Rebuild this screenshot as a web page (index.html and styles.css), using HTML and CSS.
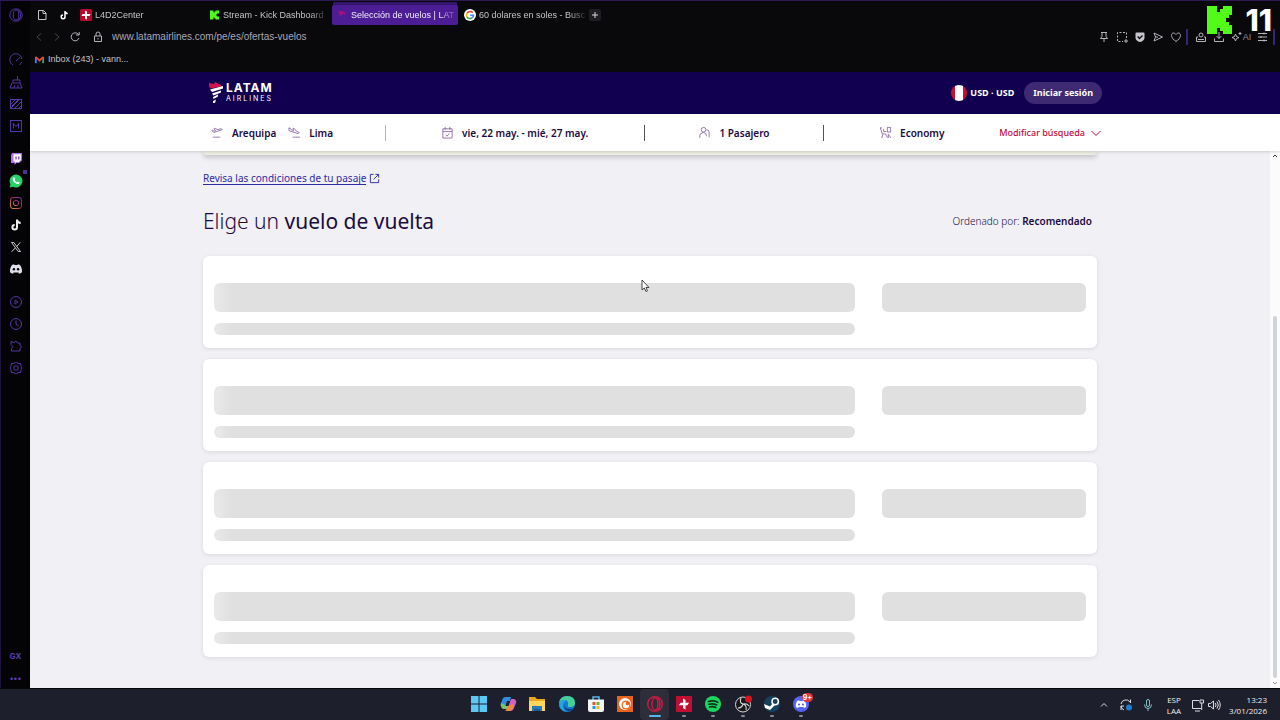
FILE: index.html
```html
<!DOCTYPE html>
<html lang="es">
<head>
  <meta charset="UTF-8" />
  <meta name="viewport" content="width=device-width, initial-scale=1.0"/>
  <title>Selección de vuelos | LATAM Airlines</title>
  <link rel="stylesheet" href="styles.css">
</head>
<body>

<div class="desktop">
  <div class="browser">

    <!-- Sidebar -->
    <nav class="sidebar" aria-label="Barra lateral">
      <button class="side-btn side-logo" aria-label="Opera"><svg viewBox="0 0 14 14"><circle cx="7" cy="7" r="6.2"/><ellipse cx="7" cy="7" rx="2.8" ry="5"/><path d="M9 1.5C12.500 4 12.500 10 9 12.500"/></svg></button>
      <button class="side-btn" aria-label="GX Control"><svg viewBox="0 0 14 14"><path d="M4 12A6 6 0 1 1 12.800 6M7 8l4-3.500M12.500 9a6 6 0 0 1-2 3"/></svg></button>
      <button class="side-btn" aria-label="GX Cleaner"><svg viewBox="0 0 14 14"><path d="M8.500 1v4M4 5h7v3H4zM3 8l-2 5h12l-2-5M5 13l1-3M9 13v-3"/></svg></button>
      <button class="side-btn" aria-label="GX Mods"><svg viewBox="0 0 14 14"><rect x="1.500" y="2.500" width="11" height="9"/><path d="M2 7l4-4M2 11l8-8M6 11l6-6M3 9l6-6M10 11l2-2"/></svg></button>
      <button class="side-btn" aria-label="Mods"><svg viewBox="0 0 14 14"><rect x="1.500" y="1.500" width="11" height="11"/><path d="M4.500 9.500v-5L7 7.500l2.500-3v5"/></svg></button>

      <button class="side-btn side-group" aria-label="Twitch"><svg class="plain" viewBox="0 0 14 14"><path fill="#b26cf5" d="M3 1h10v7.500L10 11H7.500L5.500 13v-2H2V3z"/><path fill="#fff" d="M4.500 2.300h7.300V8l-2 2H7.400L6 11V9.500H4.500z"/><path stroke="#9146d8" stroke-width="1.400" d="M7 4.500v3M9.800 4.500v3"/></svg></button>
      <button class="side-btn whatsapp" aria-label="WhatsApp"><svg class="plain" viewBox="0 0 14 14"><path fill="#25d366" d="M7 .5a6.500 6.500 0 1 1-3 12.300L.6 13.500l.9-3.200A6.500 6.500 0 0 1 7 .5z"/><path fill="#fff" d="M4.400 3.500l1-.2.9 1.800-.6.900c.5 1 1.200 1.600 2.300 2.200l.8-.8 1.800.9c0 1.500-1.300 2-2.300 1.800C6 9.700 3.300 7 3.700 4.600z"/></svg></button>
      <button class="side-btn" aria-label="Instagram"><svg class="insta" viewBox="0 0 14 14"><defs><linearGradient id="ig" x1="0" y1="1" x2="1" y2="0"><stop offset="0" stop-color="#d99a32"/><stop offset=".5" stop-color="#b02a50"/><stop offset="1" stop-color="#7a2bb0"/></linearGradient></defs><rect x="1.500" y="1.500" width="11" height="11" rx="2.500"/><circle cx="7" cy="7" r="2.700"/><path d="M10 3.800h.8"/></svg></button>
      <button class="side-btn" aria-label="TikTok"><svg class="plain" viewBox="0 0 14 14"><path fill="none" stroke="#eee" stroke-width="2" d="M8 1.500v7.800A2.300 2.300 0 1 1 5.700 7M8 2c.4 2 1.800 2.900 3.700 3"/></svg></button>
      <button class="side-btn" aria-label="X"><svg class="plain" viewBox="0 0 14 14"><path fill="none" stroke="#c9c9d2" d="M2.500 2.500h2.300l6.700 9H9.200zM11.300 2.300L7.800 6.400M6.200 8l-3.600 3.800"/></svg></button>
      <button class="side-btn" aria-label="Discord"><svg class="plain" viewBox="0 0 14 14"><path fill="#dedee8" d="M3 3l2-.8.600.8h2.800l.6-.8 2 .8c1.500 2 2.200 4.500 2 7.300-1 .8-2 1.200-3 1.500l-.7-1.200H4.700L4 11.800c-1-.3-2-.7-3-1.500C.8 7.500 1.500 5 3 3z"/><circle cx="4.900" cy="7.300" r="1.200"/><circle cx="9.100" cy="7.300" r="1.200"/></svg></button>

      <button class="side-btn side-group" aria-label="Reproductor"><svg viewBox="0 0 14 14"><circle cx="7" cy="7" r="5.500"/><path d="M6 5l3 2-3 2z"/></svg></button>
      <button class="side-btn" aria-label="Historial"><svg viewBox="0 0 14 14"><circle cx="7" cy="7" r="5.500"/><path d="M7 3.500V7l2.500 2"/></svg></button>
      <button class="side-btn" aria-label="Extensiones"><svg viewBox="0 0 14 14"><path d="M2 2.500l3 1L7 2l1.500 2H11v2.500L12.800 8 11 9.500V12H2.500V9.500L4 7.500 2 5.500z"/></svg></button>
      <button class="side-btn" aria-label="Configuración"><svg viewBox="0 0 14 14"><path d="M7 1l2 1.300 2.500.2.500 2.500L13 7l-1 2-.5 2.500-2.500.2L7 13l-2-1.300-2.500-.2L2 9 1 7l1-2 .5-2.500L5 2.300z"/><circle cx="7" cy="7" r="2.300"/></svg></button>

      <button class="side-btn side-text side-bottom">GX</button>
      <button class="side-btn side-text" aria-label="Más">•••</button>
    </nav>

    <div class="window">

      <!-- Browser chrome -->
      <header class="chrome">
        <div class="tabs">
          <button class="tab-pin" aria-label="Espacio"><svg viewBox="0 0 12 12"><path fill="none" stroke="#c6c6c9" d="M2.500 1.500h5l2.500 2.500v6.500H2.500zM7 1.500v3h3"/></svg></button>
          <button class="tab-pin" aria-label="TikTok"><svg viewBox="0 0 12 12"><path fill="none" stroke="#fff" stroke-width="1.500" d="M7 2v5.800A1.900 1.900 0 1 1 5 6M7 2.500c.3 1.400 1.300 2 2.700 2"/></svg></button>
          <button class="tab">
            <svg viewBox="0 0 12 12"><rect width="12" height="12" rx="1.500" fill="#b8062d"/><path fill="#fff" d="M5 1.500l2 1V5h3.500l-1 2H7v3.500l-2-1V7H1.500l1-2H5z"/></svg>
            <span>L4D2Center</span>
          </button>
          <button class="tab">
            <svg viewBox="0 0 12 12"><path fill="#53fc18" d="M2 1.500h3.500v2h1v-1h1v-1H11v3H9v1H8v1h1v1h2v3H7.500v-1h-1v-1h-1v2H2z"/></svg>
            <span>Stream - Kick Dashboard</span>
          </button>
          <button class="tab tab-active">
            <svg viewBox="0 0 12 12"><path fill="#a3127f" d="M2 2.500c3-1 5-.5 8 1.300L8.500 5.500 6 5l-.5 3.500z"/></svg>
            <span>Selección de vuelos | LAT</span>
          </button>
          <button class="tab">
            <svg viewBox="0 0 12 12"><circle cx="6" cy="6" r="6" fill="#fff"/><g fill="none" stroke-width="1.600"><path stroke="#ea4335" d="M2.900 4.300A3.600 3.600 0 0 1 8.700 3.600"/><path stroke="#fbbc05" d="M2.900 4.300a3.600 3.600 0 0 0 0 3.500"/><path stroke="#34a853" d="M2.900 7.800a3.600 3.600 0 0 0 5.500.9"/><path stroke="#4285f4" d="M8.400 8.700A3.500 3.500 0 0 0 9.500 6.200H6.200"/></g></svg>
            <span>60 dolares en soles - Busc</span>
          </button>
          <button class="tab-new" aria-label="Nueva pestaña"><svg viewBox="0 0 12 12"><path stroke="#d8d8dc" d="M6 3v6M3 6h6"/></svg></button>
        </div>

        <div class="toolbar">
          <button class="tool dim" aria-label="Atrás"><svg viewBox="0 0 12 12"><path d="M8 2.500L4 6l4 3.500"/></svg></button>
          <button class="tool dim" aria-label="Adelante"><svg viewBox="0 0 12 12"><path d="M4 2.500L8 6l-4 3.500"/></svg></button>
          <button class="tool" aria-label="Recargar"><svg viewBox="0 0 12 12"><path d="M10 7a4 4 0 1 1-1-4l1 1M10.200 1v3H7"/></svg></button>
          <button class="tool lock" aria-label="Sitio seguro"><svg viewBox="0 0 12 12"><path d="M2.500 5h7v5.500h-7zM4 5V3a2 2 0 0 1 4 0v2M6 7v1.500"/></svg></button>
          <input class="address" type="text" aria-label="Dirección" value="www.latamairlines.com/pe/es/ofertas-vuelos">
          <div class="tools">
            <button class="tool" aria-label="Fijar"><svg viewBox="0 0 12 12"><path d="M3 1.500h6M4 1.500v4L2.500 7.500h7L8 5.500v-4M6 7.500V11"/></svg></button>
            <button class="tool" aria-label="Captura"><svg viewBox="0 0 12 12"><path stroke-dasharray="2 1.500" d="M10.500 7V1.500h-9v9H7"/><path d="M8 10h4M10 8v4"/></svg></button>
            <button class="tool" aria-label="Protección"><svg viewBox="0 0 12 12"><path fill="#c6c4cc" stroke="none" d="M1.500 2.500q0-1 1-1h7q1 0 1 1V7Q10 10 6 11 2 10 1.500 7z"/><path stroke="#0a0a0c" stroke-width="1.300" d="M3.700 5.500L5.500 7.500l3-3"/></svg></button>
            <button class="tool" aria-label="Enviar"><svg viewBox="0 0 12 12"><path d="M2 2l8.500 4L2 10l1.500-4zM3.500 6H6"/></svg></button>
            <button class="tool" aria-label="Favoritos"><svg viewBox="0 0 12 12"><path d="M6 10.500C0 6.500 1 2 3.500 2 5 2 6 3.500 6 3.500S7 2 8.500 2C11 2 12 6.500 6 10.500z"/></svg></button>
          </div>
          <span class="tool-sep"></span>
          <div class="tools tools-end">
            <button class="tool" aria-label="Perfil"><svg viewBox="0 0 12 12"><path d="M3 6H1.500v4.500h9V6H9M3 8.500h6"/><circle cx="6" cy="4" r="2"/></svg></button>
            <button class="tool" aria-label="Descargas"><svg viewBox="0 0 12 12"><path d="M6 1v6.500M3.500 5L6 7.500 8.500 5M1.500 7.500v3h9v-3"/></svg></button>
            <button class="tool tool-ai"><svg viewBox="0 0 12 12"><path d="M4.500 3l1 2.500L8 6.500 5.500 7.500l-1 2.500-1-2.500L1 6.500l2.500-1zM9 1v3M7.500 2.500h3"/></svg>AI</button>
            <button class="tool" aria-label="Menú"><svg viewBox="0 0 12 12"><path d="M1 2.500h9M1 6h9M1 9.500h9M7 1.500v2M4 5v2M7 8.500v2"/></svg></button>
          </div>
          <span class="tool-sep"></span>
        </div>

        <div class="bookmarks">
          <a class="bookmark" href="#">
            <svg viewBox="0 0 12 12"><path fill="#4285f4" d="M1 3h2v7H1z"/><path fill="#34a853" d="M9 3h2v7H9z"/><path fill="none" stroke="#ea4335" stroke-width="2" d="M2 3.500l4 3.500 4-3.500"/></svg>
            Inbox (243) - vann...
          </a>
        </div>
      </header>

      <!-- Page -->
      <header class="site-header">
        <div class="wrap site-header-inner">
          <a class="logo" href="#" aria-label="LATAM Airlines">
            <svg viewBox="0 0 16 24"><path fill="#d3124f" d="M1 2l5 1L7 1l6 3v1.500L3 7.500 1 6z"/><path fill="#fff" d="M2 8.500L15 5v2.500L4 11zM4 12.500L13 9.500v2L5.500 14.500zM5 16l5-2.500v2L5.500 18zM5 20l3-1.500L7 22H5z"/></svg>
            <span class="logo-text"><b>LATAM</b><i>AIRLINES</i></span>
          </a>
          <div class="header-actions">
            <button class="currency">
              <span class="flag"></span>
              USD · USD
            </button>
            <button class="login">Iniciar sesión</button>
          </div>
        </div>
      </header>

      <section class="search-bar">
        <div class="wrap search-inner">
          <div class="search-item route">
            <span class="place"><svg viewBox="0 0 14 14"><path d="M1 5l2 2 9-3q-.5-1.500-2-1L7.500 4 4 2.500 3 3l2 2-2 .5L1.800 4.500zM2 12h8"/></svg>Arequipa</span>
            <span class="place"><svg viewBox="0 0 14 14"><path d="M1 2v3l9.500 3q1.500 0 1.500-1L9 5.500 6.500 2.500H5.500L6 5 3.500 4 2.500 2.500zM5 12h8"/></svg>Lima</span>
          </div>
          <div class="search-item dates"><svg viewBox="0 0 14 14"><path d="M2 3h10v10H2zM2 6h10M4.500 1v3M9.500 1v3M5 9.500L6.500 11 9 8"/></svg>vie, 22 may. - mié, 27 may.</div>
          <div class="search-item"><svg viewBox="0 0 14 14"><circle cx="6" cy="4" r="2.500"/><path d="M2 13v-3q0-2.500 4-3 3 .5 3 3v1M9 4q3 0 3 3v5"/></svg>1 Pasajero</div>
          <div class="search-item"><svg viewBox="0 0 14 14"><path d="M1.500 2l2 6.500H7l2 4M1 2h2M5 3v3h3M3 13l1-4M9 1.500h3.500v5H9zM10 13V9l3 4"/></svg>Economy</div>
          <button class="modify">Modificar búsqueda <svg viewBox="0 0 12 12"><path d="M1.500 4L6 8.500 10.500 4"/></svg></button>
        </div>
      </section>

      <div class="viewport">
        <main class="results">
          <div class="wrap">
            <div class="selected-flight"></div>
            <a class="conditions" href="#"><span>Revisa las condiciones de tu pasaje</span><svg viewBox="0 0 12 12"><path d="M5 1.500H1.500v9h9V7M7 1.500h3.500V5M10.500 1.500L5 7"/></svg></a>
            <div class="results-head">
              <h1>Elige un <strong>vuelo de vuelta</strong></h1>
              <button class="sort">Ordenado por: <strong>Recomendado</strong></button>
            </div>
            <ul class="flights">
              <li class="flight-card">
                <div class="bones"><span class="bone bone-lg"></span><span class="bone bone-sm"></span></div>
                <span class="bone bone-price"></span>
              </li>
              <li class="flight-card">
                <div class="bones"><span class="bone bone-lg"></span><span class="bone bone-sm"></span></div>
                <span class="bone bone-price"></span>
              </li>
              <li class="flight-card">
                <div class="bones"><span class="bone bone-lg"></span><span class="bone bone-sm"></span></div>
                <span class="bone bone-price"></span>
              </li>
              <li class="flight-card">
                <div class="bones"><span class="bone bone-lg"></span><span class="bone bone-sm"></span></div>
                <span class="bone bone-price"></span>
              </li>
            </ul>
          </div>
        </main>
        <div class="scrollbar">
          <svg viewBox="0 0 10 10"><path d="M3 6l2-2 2 2"/></svg>
          <div class="scroll-track"><div class="scroll-thumb"></div></div>
          <svg class="down" viewBox="0 0 10 10"><path d="M3 4l2 2 2-2"/></svg>
        </div>
      </div>
    </div>
  </div>

  <!-- Taskbar -->
  <footer class="taskbar">
    <div class="apps">
      <button class="app" aria-label="Inicio"><svg viewBox="0 0 18 18"><path fill="#5cc8f5" d="M1 1h7.500v7.500H1zM9.500 1H17v7.500H9.500zM1 9.500h7.500V17H1zM9.500 9.500H17V17H9.500z"/></svg></button>
      <button class="app" aria-label="Copilot"><svg viewBox="0 0 18 18"><path fill="#2a8fe0" d="M6 2h6l-3 9H3Q1 11 2 8l2-5z"/><path fill="#7cc36a" d="M2 8q-1 4 2 6h4l2-6-4 2z"/><path fill="#d160c0" d="M12 4h3q3 1 2 4l-2 5q-1 3-4 3H7z"/><path fill="#f0884b" d="M8 11l7-2-1 4q-1 3-4 3H6q2-1 2-5z"/><path fill="#1e1f2c" d="M8 6h3l-1.500 5h-3z"/></svg></button>
      <button class="app" aria-label="Explorador"><svg viewBox="0 0 18 18"><path fill="#e9a820" d="M1 2h6l2 2h8v12H1z"/><path fill="#ffd65c" d="M1 6h16v10H1z"/><path fill="#2878c0" d="M4 11h10v5H4z"/><path fill="#1d5a98" d="M6 14h6v2H6z"/></svg></button>
      <button class="app" aria-label="Edge"><svg viewBox="0 0 18 18"><circle cx="9" cy="9" r="8" fill="#1a78d0"/><path fill="#45cf9a" d="M9 1q8 0 8 7 0 4-5 4-3 0-2-2 1-5-4-5-3 0-5 3Q2 1 9 1z"/><path fill="#1fa7e0" d="M1 8q3-5 8-2-4 0-4 5 0 4 4 6-8-1-8-9z"/><path fill="#123c7c" d="M7 9q-1 5 4 5 3 0 5-1-2 3-5 3-6-1-4-7z"/></svg></button>
      <button class="app" aria-label="Store"><svg viewBox="0 0 18 18"><path fill="none" stroke="#55b6e8" stroke-width="1.500" d="M6 5V2h6v3"/><path fill="#f3f3f5" d="M1 4.500h16V15q0 2-2 2H3q-2 0-2-2z"/><path fill="#e8502c" d="M5.500 7h3v3h-3z"/><path fill="#6eb52c" d="M9.500 7h3v3h-3z"/><path fill="#1f9be0" d="M5.500 11h3v3h-3z"/><path fill="#f5b81c" d="M9.500 11h3v3h-3z"/></svg></button>
      <button class="app" aria-label="Crunchyroll"><svg viewBox="0 0 18 18"><path fill="#e8641c" d="M1 1h16v16H1z"/><circle cx="9" cy="9" r="6" fill="#fff"/><circle cx="10" cy="10" r="4.500" fill="#e8641c"/><circle cx="10" cy="10" r="3.200" fill="#fff"/><circle cx="11.500" cy="8.500" r="1.800" fill="#e8641c"/></svg></button>
      <button class="app running current" aria-label="Opera GX"><svg viewBox="0 0 18 18"><g fill="none" stroke="#c21d42" stroke-width="1.500"><circle cx="9" cy="9" r="7.300"/><ellipse cx="9" cy="9" rx="3" ry="6"/><path d="M11.500 2.500q5 6.500 0 13"/></g></svg></button>
      <button class="app running" aria-label="L4D2Center"><svg viewBox="0 0 18 18"><path fill="#c00f30" d="M1 1h16v16H1z"/><path fill="#fff" d="M8 3.500l2.500 1.500v2.800H14l-1.500 2.400h-2V14.500L8 13v-2.800H4l1.500-2.400H8z"/></svg></button>
      <button class="app running" aria-label="Spotify"><svg viewBox="0 0 18 18"><circle cx="9" cy="9" r="8" fill="#1ed760"/><path fill="none" stroke="#12301c" stroke-width="1.600" stroke-linecap="round" d="M4.500 6.500q5-1.500 9.300.8M5 9.300q4-1.200 7.800.7M5.500 12q3.500-1 6.300.5"/></svg></button>
      <button class="app running" aria-label="OBS"><svg viewBox="0 0 18 18"><circle cx="9" cy="9.500" r="7.500" fill="#17171c" stroke="#d8d8dc"/><path fill="none" stroke="#d8d8dc" stroke-width="1.100" d="M7 3q-2 5 2 6 4-1 6 2M9 9q-1 4-5 4M9 9q4 1 3 6"/><circle cx="14.500" cy="4" r="3.500" fill="#e0101c"/></svg></button>
      <button class="app running" aria-label="Steam"><svg viewBox="0 0 18 18"><circle cx="9" cy="9" r="8" fill="#16405f"/><path fill="#fff" d="M1 9l6 2.500L10 8l3 1-4 4-2 2-5-2z"/><circle cx="12.200" cy="6.500" r="3.200" fill="#16405f" stroke="#fff" stroke-width="1.500"/></svg></button>
      <button class="app running" aria-label="Discord"><svg viewBox="0 0 18 18"><circle cx="9" cy="9" r="8" fill="#5865f2"/><path fill="#fff" d="M5 6l2-.7.500.7h3l.5-.7 2 .7q1.500 3 1.200 6l-2.200 1-.7-1H6.700l-.7 1-2.200-1q-.3-3 1.200-6z"/><circle cx="7" cy="9.500" r="1.100" fill="#5865f2"/><circle cx="11" cy="9.500" r="1.100" fill="#5865f2"/></svg><span class="badge">9+</span></button>
    </div>
    <div class="tray">
      <button class="tray-btn" aria-label="Mostrar iconos ocultos"><svg viewBox="0 0 14 14"><path d="M4 8.500l3-3 3 3"/></svg></button>
      <button class="tray-btn" aria-label="Actualizaciones"><svg viewBox="0 0 14 14"><path d="M2 6a5 5 0 0 1 9-2M11.500 1.500V5M2 8a5 5 0 0 0 3 4M2 12V8h3"/><circle cx="10" cy="9.500" r="3" fill="#1d7fd0" stroke="none"/></svg></button>
      <button class="tray-btn" aria-label="Micrófono"><svg class="mic" viewBox="0 0 14 14"><rect x="5.500" y="1.500" width="3" height="7" rx="1.500"/><path d="M3.500 6.500q0 4 3.500 4t3.500-4M7 10.500V13"/></svg></button>
      <button class="lang">ESP<br>LAA</button>
      <button class="tray-btn net" aria-label="Red"><svg viewBox="0 0 14 14"><path d="M8 2.500H1.500v8H10M4 13h5M9 2v3h3.500V2zM10.700 5v7"/></svg></button>
      <button class="tray-btn" aria-label="Volumen"><svg viewBox="0 0 14 14"><path d="M1.500 5.500h2L6.500 3v8l-3-2.500h-2zM8.300 5q1.500 2 0 4M10 3.500q2.500 3.500 0 7M11.500 2q3.500 5 0 10"/></svg></button>
      <button class="clock">13:23<br>3/01/2026</button>
    </div>
  </footer>

  <!-- Stream overlay -->
  <div class="overlay">
    <svg viewBox="0 0 26 28"><path fill="#53fc18" d="M0 0h10v6h3V3h3V0h9v9h-3v3h-3v4h3v3h3v9h-9v-3h-3v-3h-3v6H0z"/></svg>
    <span>11</span>
  </div>
  <svg class="cursor" viewBox="0 0 9 14"><path fill="#fff" stroke="#444" d="M1 1v10l2.300-2 1.700 3.500 1.500-.7L5 8.500h3z"/></svg>
</div>

</body>
</html>
```
FILE: styles.css
```css
* {
  box-sizing: border-box;
}
body {
  margin: 0;
  font-family: "Noto Sans", "Open Sans", sans-serif;
  color: #1b0b3f;
  background: #0a0a0c;
}
button {
  padding: 0;
  border: none;
  background: none;
  color: inherit;
  font: inherit;
  cursor: pointer;
}
svg {
  display: block;
  flex: none;
}
.desktop {
  position: relative;
  display: flex;
  flex-direction: column;
  min-height: 100vh;
}
.browser {
  flex: 1;
  display: flex;
  background: #09090b;
  border-top: 1px solid #2c1a55;
}
.window {
  flex: 1;
  min-width: 0;
  display: flex;
  flex-direction: column;
}

/* sidebar */
.sidebar {
  width: 30px;
  padding: 7px 0 3px;
  display: flex;
  flex-direction: column;
  align-items: center;
  gap: 8px;
  background: #040406;
  border-left: 1px solid #1c1138;
}
.side-btn {
  position: relative;
  width: 14px;
  height: 14px;
}
.side-btn svg {
  width: 14px;
  height: 14px;
  fill: none;
  stroke: #5335a8;
}
.side-btn .plain {
  fill: #040406;
  stroke: none;
}
.side-btn .insta {
  stroke: url(#ig);
}
.side-logo {
  margin-bottom: 23px;
}
.side-group {
  margin-top: 11px;
}
.side-bottom {
  margin-top: auto;
}
.side-text {
  color: #5a3bb4;
  font: bold 8px/14px Inter, sans-serif;
}
.whatsapp::after {
  content: '';
  position: absolute;
  top: -4px;
  right: -4px;
  width: 4px;
  height: 4px;
  background: #4b2f9c;
}

/* tabs and toolbar */
.chrome {
  height: 71px;
  font-family: "Liberation Sans", Arial, sans-serif;
  font-size: 9px;
  line-height: 12px;
  color: #c4c3c8;
}
.tabs {
  display: flex;
  align-items: center;
  gap: 2px;
  height: 26px;
  padding: 3px 0 1px 2px;
}
.tab-pin {
  width: 20px;
}
.tab-pin svg {
  width: 12px;
  height: 12px;
  margin: 0 auto;
}
.tab {
  display: flex;
  align-items: center;
  gap: 3px;
  width: 126px;
  height: 20px;
  padding: 0 5px 0 4px;
  border-radius: 2px;
}
.tab svg {
  width: 12px;
  height: 12px;
}
.tab span {
  flex: 1;
  white-space: nowrap;
  text-align: left;
  mask-image: linear-gradient(to right, #000 85%, rgba(0, 0, 0, 0.2));
}
.tab-active {
  background: #4c1d95;
  color: #f1ecfa;
  box-shadow: 0 -4px 0 -1px #35156c;
}
.tab-new {
  width: 12px;
  height: 12px;
  margin-left: 1px;
  background: #1d1d22;
  border-radius: 2px;
}
.toolbar {
  display: flex;
  align-items: center;
  height: 20px;
  padding-right: 5px;
}
.tool {
  display: flex;
  align-items: center;
  justify-content: center;
  width: 18px;
}
.tool svg {
  width: 12px;
  height: 12px;
  fill: none;
  stroke: #b5b3bb;
}
.tool.dim svg {
  stroke: #45434c;
}
.lock {
  margin: 0 5px;
}
.address {
  flex: 1;
  min-width: 0;
  padding: 0;
  border: none;
  outline: none;
  background: none;
  color: #aaa6b6;
  font: 10px/14px "Liberation Sans", Arial, sans-serif;
}
.tools {
  display: flex;
}
.tools-end {
  margin-left: 4px;
}
.tool-ai {
  width: 26px;
  color: #8f8d96;
}
.tool-sep {
  width: 2px;
  height: 16px;
  margin-left: 1px;
  background: #38247a;
}
.bookmarks {
  display: flex;
  align-items: center;
  height: 24px;
  padding-left: 4px;
}
.bookmark {
  display: flex;
  align-items: center;
  gap: 3px;
  color: inherit;
  text-decoration: none;
}
.bookmark svg {
  width: 11px;
  height: 11px;
}

/* site header */
.wrap {
  width: 100%;
  max-width: 894px;
  margin: 0 auto;
}
.site-header {
  background: #10004f;
  color: #fff;
}
.site-header-inner {
  display: flex;
  align-items: center;
  justify-content: space-between;
  height: 42px;
  padding-bottom: 1px;
}
.logo {
  display: flex;
  align-items: center;
  gap: 2px;
  color: inherit;
  text-decoration: none;
}
.logo svg {
  width: 16px;
  height: 24px;
}
.logo-text {
  display: grid;
  font-family: Inter, sans-serif;
}
.logo-text b {
  font-size: 12px;
  line-height: 12px;
  letter-spacing: 1px;
}
.logo-text i {
  font-size: 7px;
  font-style: normal;
  line-height: 10px;
  letter-spacing: 2px;
}
.header-actions {
  display: flex;
  gap: 10px;
  font-size: 9px;
  font-weight: 700;
}
.currency {
  display: flex;
  align-items: center;
  gap: 3px;
}
.flag {
  width: 16px;
  height: 16px;
  border-radius: 50%;
  background: linear-gradient(to right, #c8102e 28%, #fff 28% 72%, #c8102e 72%);
}
.login {
  height: 22px;
  padding: 0 9px;
  border-radius: 11px;
  background: #3e2a72;
}

/* search summary */
.search-bar {
  position: relative;
  z-index: 1;
  background: #fff;
  box-shadow: 0 1px 3px rgba(0, 0, 0, 0.15);
}
.search-inner {
  display: grid;
  grid-template-columns: 177fr 259fr 180fr 176fr 102fr;
  align-items: center;
  height: 37px;
  font-size: 10px;
  font-weight: 600;
}
.search-item {
  display: flex;
  align-items: center;
  justify-content: center;
  gap: 8px;
  height: 16px;
  white-space: nowrap;
}
.search-item + .search-item {
  border-left: 1px solid #55505f;
}
.search-item + .dates {
  border-left-color: #b5b3ba;
}
.search-item svg {
  width: 13px;
  height: 13px;
  fill: none;
  stroke: #76509a;
  stroke-width: 0.8;
}
.route {
  justify-content: flex-start;
  gap: 12px;
  padding-left: 3px;
}
.place {
  display: flex;
  align-items: center;
  gap: 8px;
}
.modify {
  display: flex;
  align-items: center;
  justify-content: flex-end;
  gap: 5px;
  color: #c00a3c;
  font-size: 9px;
  font-weight: 500;
  white-space: nowrap;
}
.modify svg {
  width: 12px;
  height: 12px;
  fill: none;
  stroke: #c00a3c;
}

/* results */
.viewport {
  flex: 1;
  display: flex;
}
.results {
  flex: 1;
  padding-bottom: 30px;
  background: #f0f0f5;
}
.selected-flight {
  height: 4px;
  background: #eeeee4;
  border-radius: 0 0 6px 6px;
  box-shadow: 0 2px 5px rgba(0, 0, 0, 0.25);
}
.conditions {
  display: inline-flex;
  align-items: center;
  gap: 3px;
  margin-top: 17px;
  color: #2d2aa5;
  font-size: 10px;
  line-height: 16px;
  text-decoration: none;
}
.conditions span {
  border-bottom: 1px solid #2d2aa5;
  line-height: 12px;
}
.conditions svg {
  width: 11px;
  height: 11px;
  fill: none;
  stroke: #2d2aa5;
}
.results-head {
  display: flex;
  align-items: center;
  justify-content: space-between;
  margin: 18px 0 19px;
  padding-right: 5px;
}
.results-head h1 {
  margin: 0;
  font-size: 21px;
  font-weight: 300;
  line-height: 32px;
}
.results-head h1 strong {
  font-weight: 400;
}
.sort {
  font-size: 10px;
  font-weight: 300;
}
.sort strong {
  font-weight: 600;
}
.flights {
  display: grid;
  gap: 11px;
  margin: 0;
  padding: 0;
  list-style: none;
}
.flight-card {
  display: flex;
  gap: 27px;
  padding: 27px 11px 13px;
  background: #fff;
  border-radius: 6px;
  box-shadow: 0 1px 4px rgba(0, 0, 0, 0.1);
}
.bones {
  flex: 1;
  display: grid;
  gap: 11px;
}
.bone {
  background: #e0e0e0;
  border-radius: 6px;
}
.bones .bone {
  background: linear-gradient(to right, #e9e9e9, #e0e0e0 18px);
}
.bone-lg,
.bone-price {
  height: 29px;
}
.bone-sm {
  height: 12px;
}
.bone-price {
  width: 204px;
}
.scrollbar {
  display: flex;
  flex-direction: column;
  width: 10px;
  background: #fbfbfc;
}
.scrollbar svg {
  width: 10px;
  height: 10px;
  fill: none;
  stroke: #333;
}
.scrollbar .down {
  stroke: #999;
}
.scroll-track {
  flex: 1;
  display: flex;
  flex-direction: column;
  justify-content: flex-end;
  align-items: center;
}
.scroll-thumb {
  width: 4px;
  height: 70%;
  border-radius: 2px;
  background: #d0d3d8;
}

/* taskbar */
.taskbar {
  display: grid;
  grid-template-columns: 1fr 352px 1fr;
  height: 32px;
  background: #1e1f2c;
  border-top: 1px solid #08080c;
  color: #eee;
}
.apps {
  grid-column: 2;
  display: grid;
  grid-template-columns: repeat(12, 1fr);
}
.app {
  position: relative;
  display: grid;
  place-items: center;
  padding-bottom: 1px;
}
.app svg {
  width: 18px;
  height: 18px;
}
.current {
  background: #2d2e3a;
  border-radius: 4px;
}
.running::after {
  content: '';
  position: absolute;
  bottom: 3px;
  left: 50%;
  width: 4px;
  height: 2px;
  margin-left: -2px;
  border-radius: 1px;
  background: #8b8b92;
}
.current::after {
  width: 12px;
  margin-left: -6px;
  background: #55b8e8;
}
.badge {
  position: absolute;
  top: 4px;
  right: 3px;
  padding: 0 1px;
  border-radius: 5px;
  background: #e03540;
  color: #fff;
  font: bold 7px/9px Inter, sans-serif;
}
.tray {
  display: flex;
  align-items: center;
  justify-content: flex-end;
  gap: 8px;
  padding-right: 13px;
  font-family: "Open Sans", sans-serif;
  font-size: 8px;
  line-height: 11px;
}
.tray-btn svg {
  width: 14px;
  height: 14px;
  fill: none;
  stroke: #dcdce2;
}
.tray-btn .mic {
  stroke: #83c3c8;
}
.lang {
  margin: 0 2px 0 4px;
}
.net {
  margin-right: -6px;
}
.clock {
  text-align: right;
}

/* things drawn over the desktop */
.overlay {
  position: absolute;
  top: 6px;
  right: 8px;
  display: flex;
  align-items: center;
  gap: 13px;
  color: #fff;
  font: 800 30px/28px Inter, sans-serif;
}
.overlay svg {
  width: 26px;
  height: 28px;
}
.cursor {
  position: absolute;
  top: 279px;
  left: 641px;
  width: 9px;
  height: 14px;
}
```
